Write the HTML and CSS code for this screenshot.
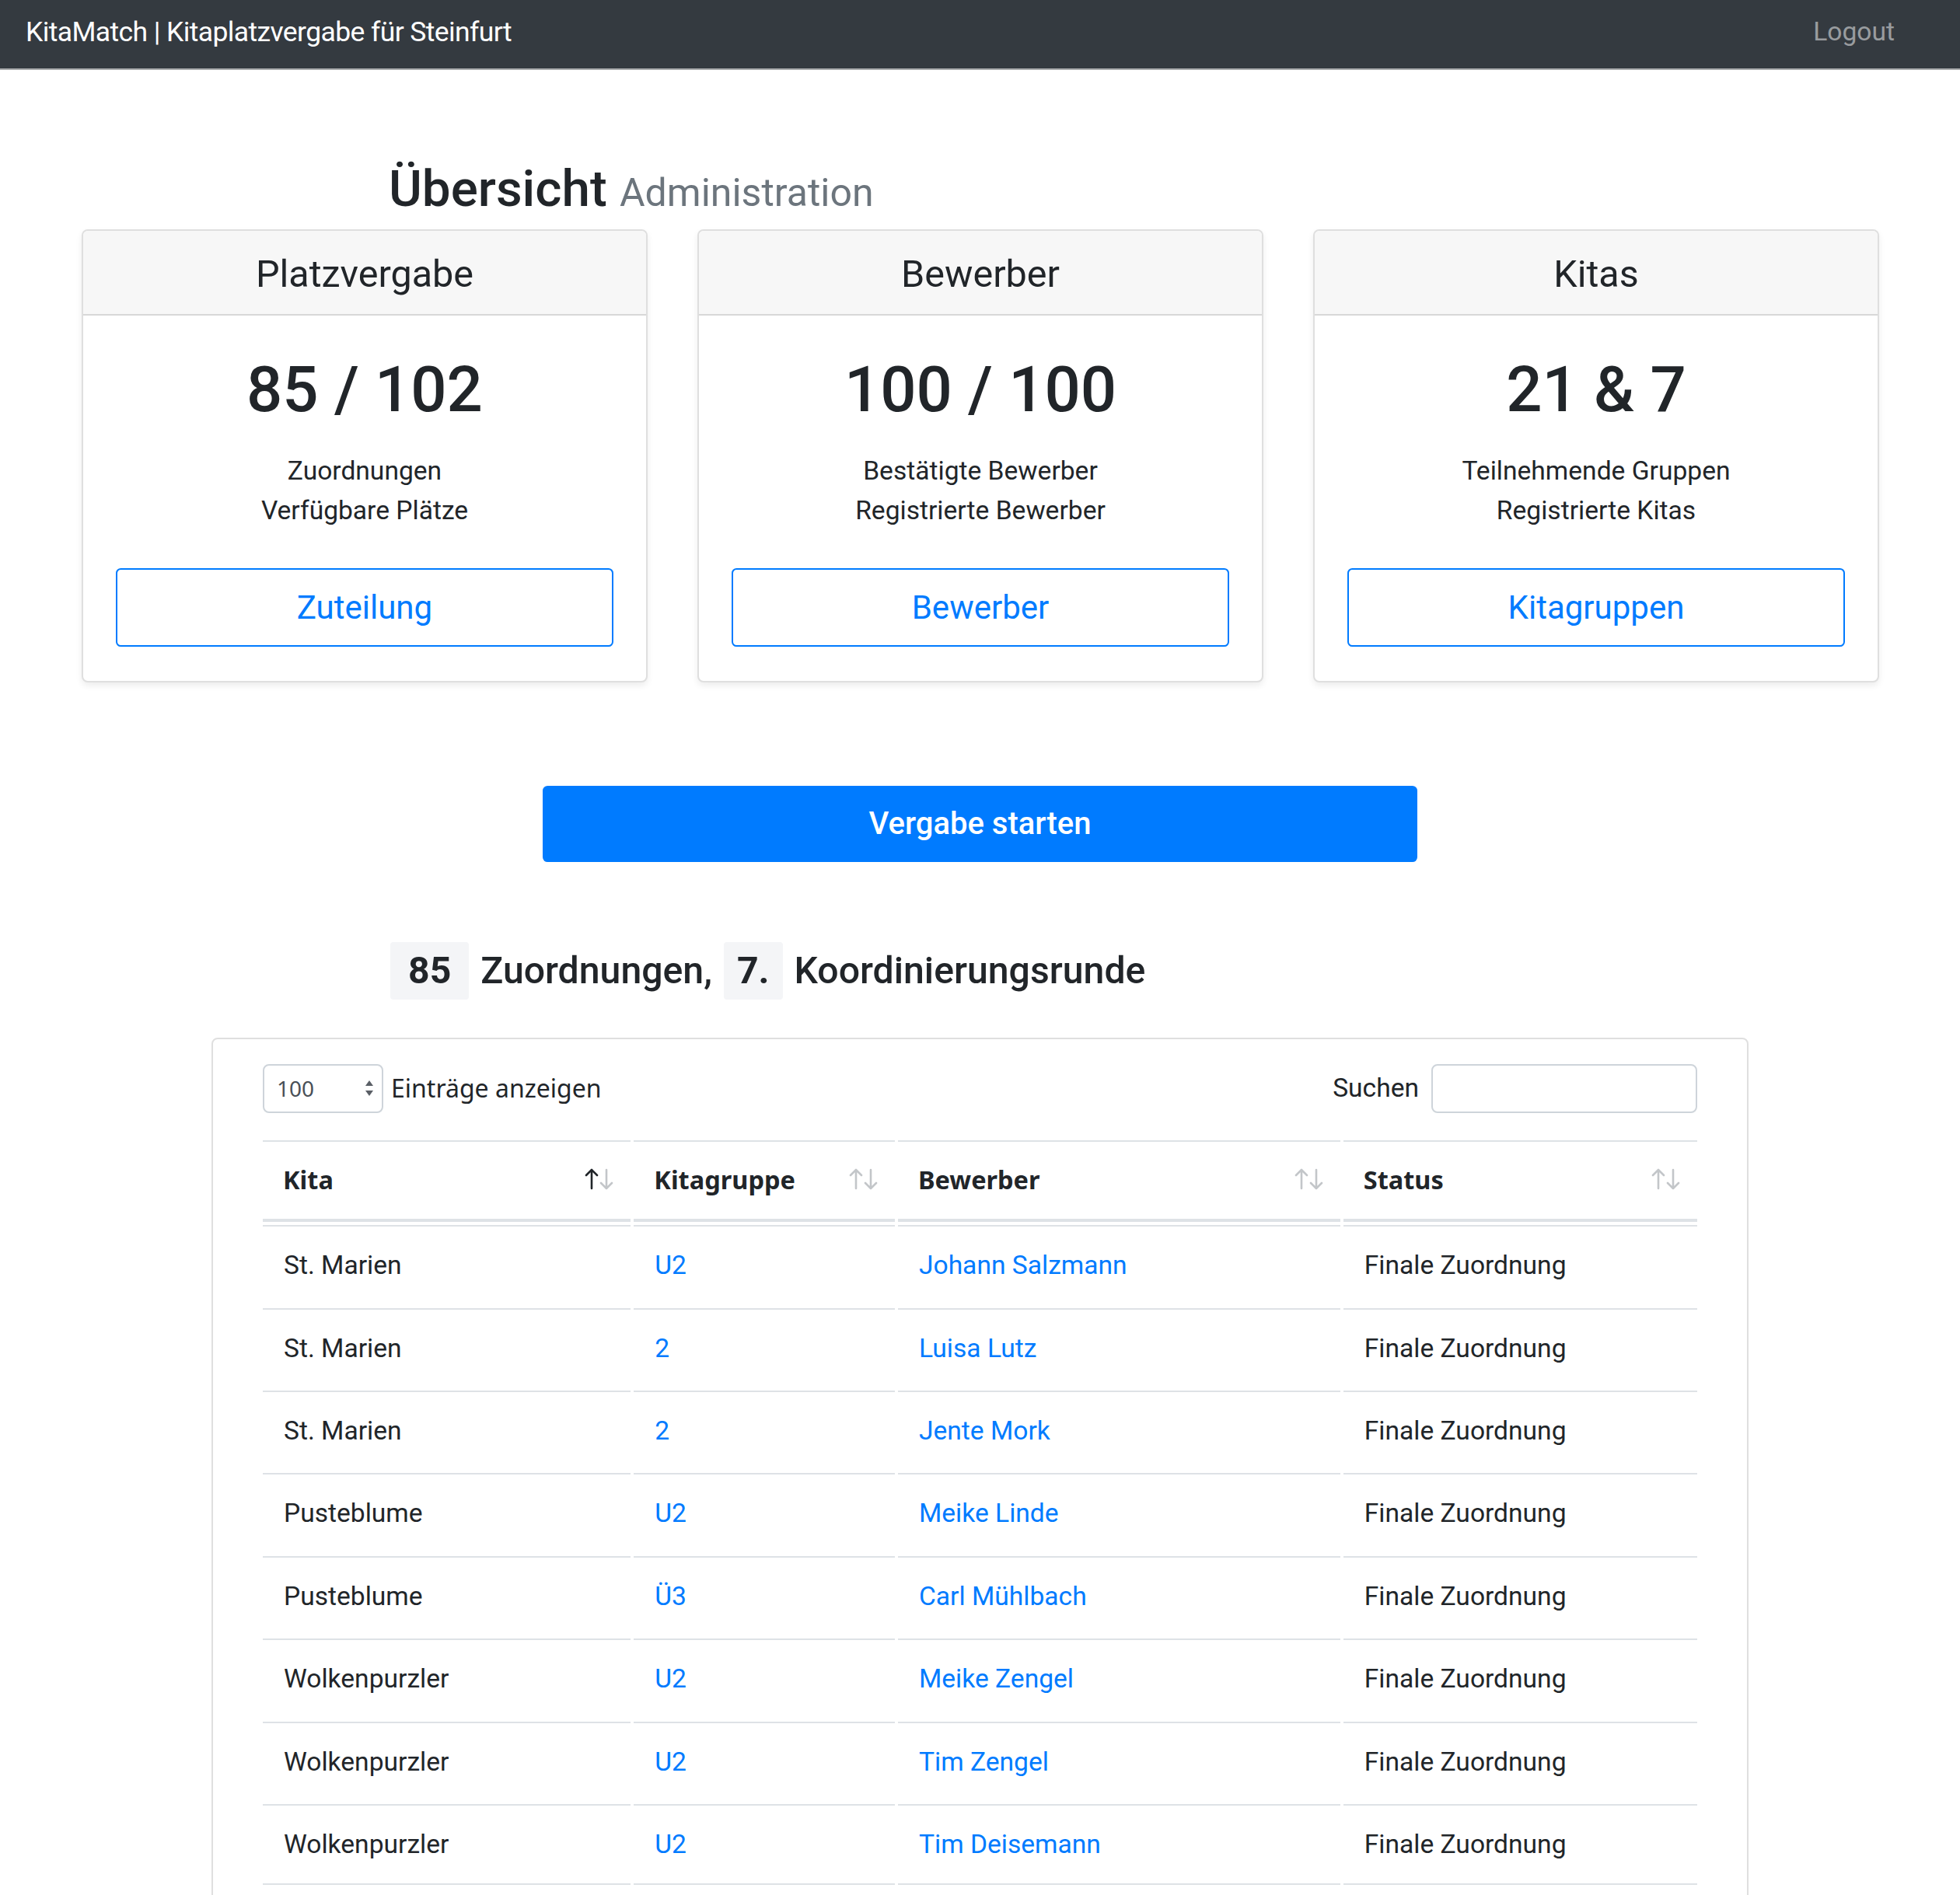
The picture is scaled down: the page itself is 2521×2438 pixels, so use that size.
FILE: index.html
```html
<!DOCTYPE html>
<html lang="de">
<head>
<meta charset="utf-8">
<title>KitaMatch | Übersicht</title>
<link rel="stylesheet" href="styles.css">
</head>
<body>
<nav class="navbar">
  <span class="brand">KitaMatch | Kitaplatzvergabe für Steinfurt</span>
  <a class="logout" href="#">Logout</a>
</nav>

<main class="page">
  <h2 class="title">Übersicht <small>Administration</small></h2>

  <div class="cards">
    <section class="stat-card">
      <div class="stat-head"><h4>Platzvergabe</h4></div>
      <div class="stat-body">
        <h1 class="stat-num">85 / 102</h1>
        <p class="stat-text">Zuordnungen<br>Verfügbare Plätze</p>
        <a class="btn-outline" href="#">Zuteilung</a>
      </div>
    </section>
    <section class="stat-card">
      <div class="stat-head"><h4>Bewerber</h4></div>
      <div class="stat-body">
        <h1 class="stat-num">100 / 100</h1>
        <p class="stat-text">Bestätigte Bewerber<br>Registrierte Bewerber</p>
        <a class="btn-outline" href="#">Bewerber</a>
      </div>
    </section>
    <section class="stat-card">
      <div class="stat-head"><h4>Kitas</h4></div>
      <div class="stat-body">
        <h1 class="stat-num">21 &amp; 7</h1>
        <p class="stat-text">Teilnehmende Gruppen<br>Registrierte Kitas</p>
        <a class="btn-outline" href="#">Kitagruppen</a>
      </div>
    </section>
  </div>

  <div class="start-row">
    <button class="btn-start" type="button">Vergabe starten</button>
  </div>

  <h4 class="round-title"><span class="pill">85</span> Zuordnungen, <span class="pill">7.</span> Koordinierungsrunde</h4>

  <div class="table-card">
    <div class="controls">
      <div class="length">
        <div class="select">
          <span>100</span>
          <svg class="select-arrows" width="12" height="22" viewBox="0 0 12 22"><path d="M6 1 L11 8 L1 8 Z" fill="#5a5f66"/><path d="M6 21 L11 14 L1 14 Z" fill="#5a5f66"/></svg>
        </div>
        <span class="length-label">Einträge anzeigen</span>
      </div>
      <label class="search">Suchen <span class="search-input"></span></label>
    </div>

    <table class="data">
      <thead>
        <tr>
          <th class="c1">Kita<svg class="sort" width="40" height="30" viewBox="0 0 40 30"><g fill="none" stroke-width="2.6" stroke-linecap="round" stroke-linejoin="round"><path d="M10 27 V3 M3 10 L10 3 L17 10" stroke="#212529"/><path d="M29 3 V27 M22 20 L29 27 L36 20" stroke="#c3c6c9"/></g></svg></th>
          <th class="c2">Kitagruppe<svg class="sort" width="40" height="30" viewBox="0 0 40 30"><g fill="none" stroke="#c3c6c9" stroke-width="2.6" stroke-linecap="round" stroke-linejoin="round"><path d="M10 27 V3 M3 10 L10 3 L17 10"/><path d="M29 3 V27 M22 20 L29 27 L36 20"/></g></svg></th>
          <th class="c3">Bewerber<svg class="sort" width="40" height="30" viewBox="0 0 40 30"><g fill="none" stroke="#c3c6c9" stroke-width="2.6" stroke-linecap="round" stroke-linejoin="round"><path d="M10 27 V3 M3 10 L10 3 L17 10"/><path d="M29 3 V27 M22 20 L29 27 L36 20"/></g></svg></th>
          <th class="c4">Status<svg class="sort" width="40" height="30" viewBox="0 0 40 30"><g fill="none" stroke="#c3c6c9" stroke-width="2.6" stroke-linecap="round" stroke-linejoin="round"><path d="M10 27 V3 M3 10 L10 3 L17 10"/><path d="M29 3 V27 M22 20 L29 27 L36 20"/></g></svg></th>
        </tr>
      </thead>
      <tbody>
        <tr><td>St. Marien</td><td><a href="#">U2</a></td><td><a href="#">Johann Salzmann</a></td><td>Finale Zuordnung</td></tr>
        <tr><td>St. Marien</td><td><a href="#">2</a></td><td><a href="#">Luisa Lutz</a></td><td>Finale Zuordnung</td></tr>
        <tr><td>St. Marien</td><td><a href="#">2</a></td><td><a href="#">Jente Mork</a></td><td>Finale Zuordnung</td></tr>
        <tr><td>Pusteblume</td><td><a href="#">U2</a></td><td><a href="#">Meike Linde</a></td><td>Finale Zuordnung</td></tr>
        <tr><td>Pusteblume</td><td><a href="#">Ü3</a></td><td><a href="#">Carl Mühlbach</a></td><td>Finale Zuordnung</td></tr>
        <tr><td>Wolkenpurzler</td><td><a href="#">U2</a></td><td><a href="#">Meike Zengel</a></td><td>Finale Zuordnung</td></tr>
        <tr><td>Wolkenpurzler</td><td><a href="#">U2</a></td><td><a href="#">Tim Zengel</a></td><td>Finale Zuordnung</td></tr>
        <tr><td>Wolkenpurzler</td><td><a href="#">U2</a></td><td><a href="#">Tim Deisemann</a></td><td>Finale Zuordnung</td></tr>
      </tbody>
    </table>
  </div>
</main>
</body>
</html>
```

FILE: styles.css
```css
* { box-sizing: border-box; }

html, body {
  margin: 0;
  padding: 0;
}

body {
  font-family: Roboto, "Liberation Sans", Arial, sans-serif;
  font-size: 33.6px;
  line-height: 1.5;
  color: #212529;
  background: #fff;
}

a { color: #007bff; text-decoration: none; }

/* Navbar */
.navbar {
  height: 90px;
  background: #343a40;
  border-bottom: 2px solid #a9abad;
  display: flex;
  align-items: center;
  justify-content: space-between;
  padding: 0 84px 6px 33px;
}

.brand {
  color: #fff;
  font-size: 35.5px;
  letter-spacing: -0.6px;
  line-height: 1.2;
}

.logout {
  color: rgba(255, 255, 255, 0.5);
  font-size: 33.6px;
}

/* Title */
.title {
  margin: 0;
  padding: 114px 0 12px 500px;
  font-size: 65.5px;
  font-weight: 500;
  line-height: 1.2;
}

.title small {
  font-size: 50px;
  font-weight: 400;
  color: #6c757d;
}

/* Stat cards */
.cards {
  display: grid;
  grid-template-columns: repeat(3, 1fr);
  gap: 64px;
  padding: 0 104px 0 105px;
}

.stat-card {
  border: 2px solid rgba(0, 0, 0, 0.125);
  border-radius: 8px;
  box-shadow: 0 4px 8px rgba(0, 0, 0, 0.075);
  overflow: hidden;
  background: #fff;
}

.stat-head {
  background: #f7f7f7;
  border-bottom: 2px solid rgba(0, 0, 0, 0.125);
  padding: 26px 42px 21px;
  text-align: center;
}

.stat-head h4 {
  margin: 0;
  font-size: 48.5px;
  font-weight: 400;
  line-height: 60px;
}

.stat-body {
  padding: 45px 42px 44px;
  text-align: center;
}

.stat-num {
  margin: 0 0 30px;
  font-size: 81.5px;
  font-weight: 500;
  line-height: 100.8px;
}

.stat-text {
  margin: 0 0 49px;
}

.btn-outline {
  display: block;
  border: 2px solid #007bff;
  border-radius: 6.3px;
  color: #007bff;
  font-size: 42px;
  line-height: 1.5;
  padding: 16.8px 33.6px;
}

/* Start button */
.start-row {
  display: flex;
  justify-content: center;
  margin-top: 133px;
}

.btn-start {
  width: 1125px;
  height: 98px;
  border: 0;
  border-radius: 6.3px;
  background: #007bff;
  color: #fff;
  font-family: inherit;
  font-size: 40px;
  font-weight: 500;
  line-height: 1.5;
}

/* Round title */
.round-title {
  margin: 103px 0 0;
  padding-left: 502px;
  font-size: 48.2px;
  font-weight: 500;
  line-height: 74px;
  word-spacing: 3px;
}

.pill {
  display: inline-block;
  background: #f4f5f7;
  border-radius: 4px;
  padding: 0 23px;
  font-weight: 700;
  word-spacing: 0;
}

.pill + .pill { padding: 0 17px; }

/* Table card */
.table-card {
  width: 1977px;
  margin: 49px auto 0;
  border: 2px solid rgba(0, 0, 0, 0.125);
  border-radius: 8px;
  padding: 32px 64px 64px;
}

.controls {
  display: flex;
  align-items: center;
  justify-content: space-between;
  height: 63px;
}

.length {
  display: flex;
  align-items: center;
}

.select {
  width: 155px;
  height: 63px;
  border: 2px solid #ced4da;
  border-radius: 8px;
  display: flex;
  align-items: center;
  justify-content: space-between;
  padding: 0 10px 0 16px;
  font-family: "Noto Sans", "Open Sans", sans-serif;
  font-size: 28px;
  color: #495057;
}

.select-arrows { display: block; }

.length-label {
  margin-left: 10px;
  font-family: "Noto Sans", "Open Sans", sans-serif;
  font-size: 32px;
}

.search {
  display: flex;
  align-items: center;
  gap: 16px;
}

.search-input {
  display: block;
  width: 342px;
  height: 63px;
  border: 2px solid #ced4da;
  border-radius: 8px;
}

/* Data table */
.data {
  margin-top: 31px;
  margin-left: -4px;
  width: calc(100% + 8px);
  border-collapse: separate;
  border-spacing: 4px;
  table-layout: fixed;
}

.data .c1 { width: 471px; }
.data .c2 { width: 334px; }
.data .c3 { width: 566px; }
.data .c4 { width: 453px; }

.data th {
  position: relative;
  text-align: left;
  padding: 24.5px 25px 24.5px 26px;
  border-top: 2px solid #dee2e6;
  border-bottom: 4px solid #dee2e6;
  font-family: "Noto Sans", "Open Sans", sans-serif;
  font-size: 32.5px;
  font-weight: 700;
  line-height: 50.4px;
  vertical-align: bottom;
}

.sort {
  position: absolute;
  right: 20px;
  top: 33px;
}

.data td {
  padding: 25px 25px 25px 27px;
  border-top: 2px solid #dee2e6;
  line-height: 50.4px;
  vertical-align: top;
}

.data tbody tr:last-child td {
  border-bottom: 2px solid #dee2e6;
}
```
